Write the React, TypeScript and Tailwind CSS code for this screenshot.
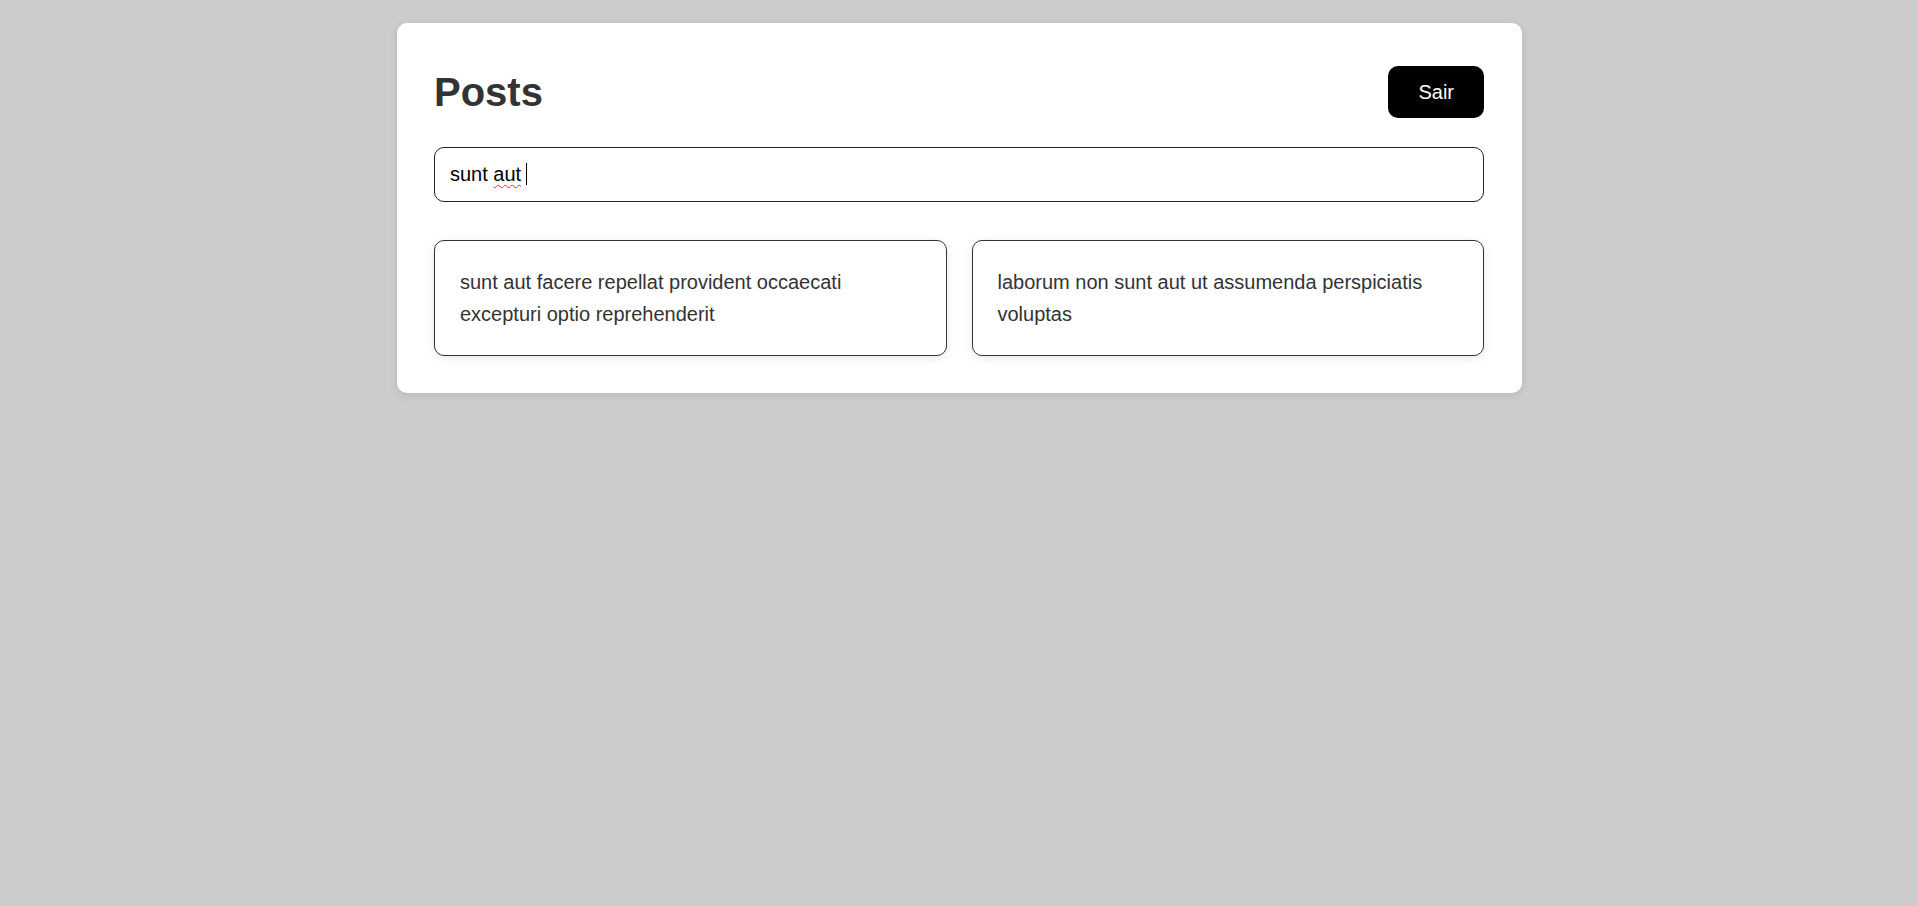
import React, { useEffect, useRef } from 'react'

const posts = [
  { id: 1, title: 'sunt aut facere repellat provident occaecati excepturi optio reprehenderit' },
  { id: 2, title: 'laborum non sunt aut ut assumenda perspiciatis voluptas' },
]

const App = () => {
  const inputRef = useRef<HTMLInputElement>(null)

  useEffect(() => {
    const el = inputRef.current
    if (el) {
      el.focus()
      el.setSelectionRange(el.value.length, el.value.length)
    }
  }, [])

  return (
    <div className="min-h-screen bg-[#cccccc] pt-[23px] font-['Liberation_Sans',Arial,sans-serif]">
      <div className="mx-auto w-[1125px] rounded-[10px] bg-white px-[37.5px] pt-[43px] pb-[37px] shadow-[0_2px_8px_rgba(0,0,0,0.1)]">

        {/* Header */}
        <div className="flex h-[52px] items-center justify-between">
          <h1 className="text-[40px] font-bold leading-none text-[#333]">Posts</h1>
          <button className="h-[52px] rounded-[10px] bg-black px-[30px] text-[20px] text-white">
            Sair
          </button>
        </div>

        {/* Search */}
        <div className="relative mt-[28.5px]">
          <input
            ref={inputRef}
            defaultValue="sunt aut "
            spellCheck={false}
            className="block h-[55px] w-full rounded-[10px] border border-[#222] px-[15px] text-[20px] text-black caret-transparent outline-none"
          />
          {/* spellcheck squiggle + caret */}
          <span className="pointer-events-none absolute left-[16px] top-1/2 flex -translate-y-1/2 items-center text-[20px] whitespace-pre text-transparent">
            <span>sunt </span>
            <span className="underline decoration-red-500 decoration-wavy decoration-[1px] underline-offset-[3px]">aut</span>
            <span className="ml-[5px] inline-block h-[22px] w-px bg-black" />
          </span>
        </div>

        {/* Posts list */}
        <div className="mt-[38.5px] grid grid-cols-2 gap-[25px]">
          {posts.map((post) => (
            <div
              key={post.id}
              className="rounded-[10px] border border-[#333] p-[25px] text-[20px] leading-[32px] text-[#333] shadow-[0_2px_8px_rgba(0,0,0,0.1)]"
            >
              {post.title}
            </div>
          ))}
        </div>
      </div>
    </div>
  )
}

export default App
